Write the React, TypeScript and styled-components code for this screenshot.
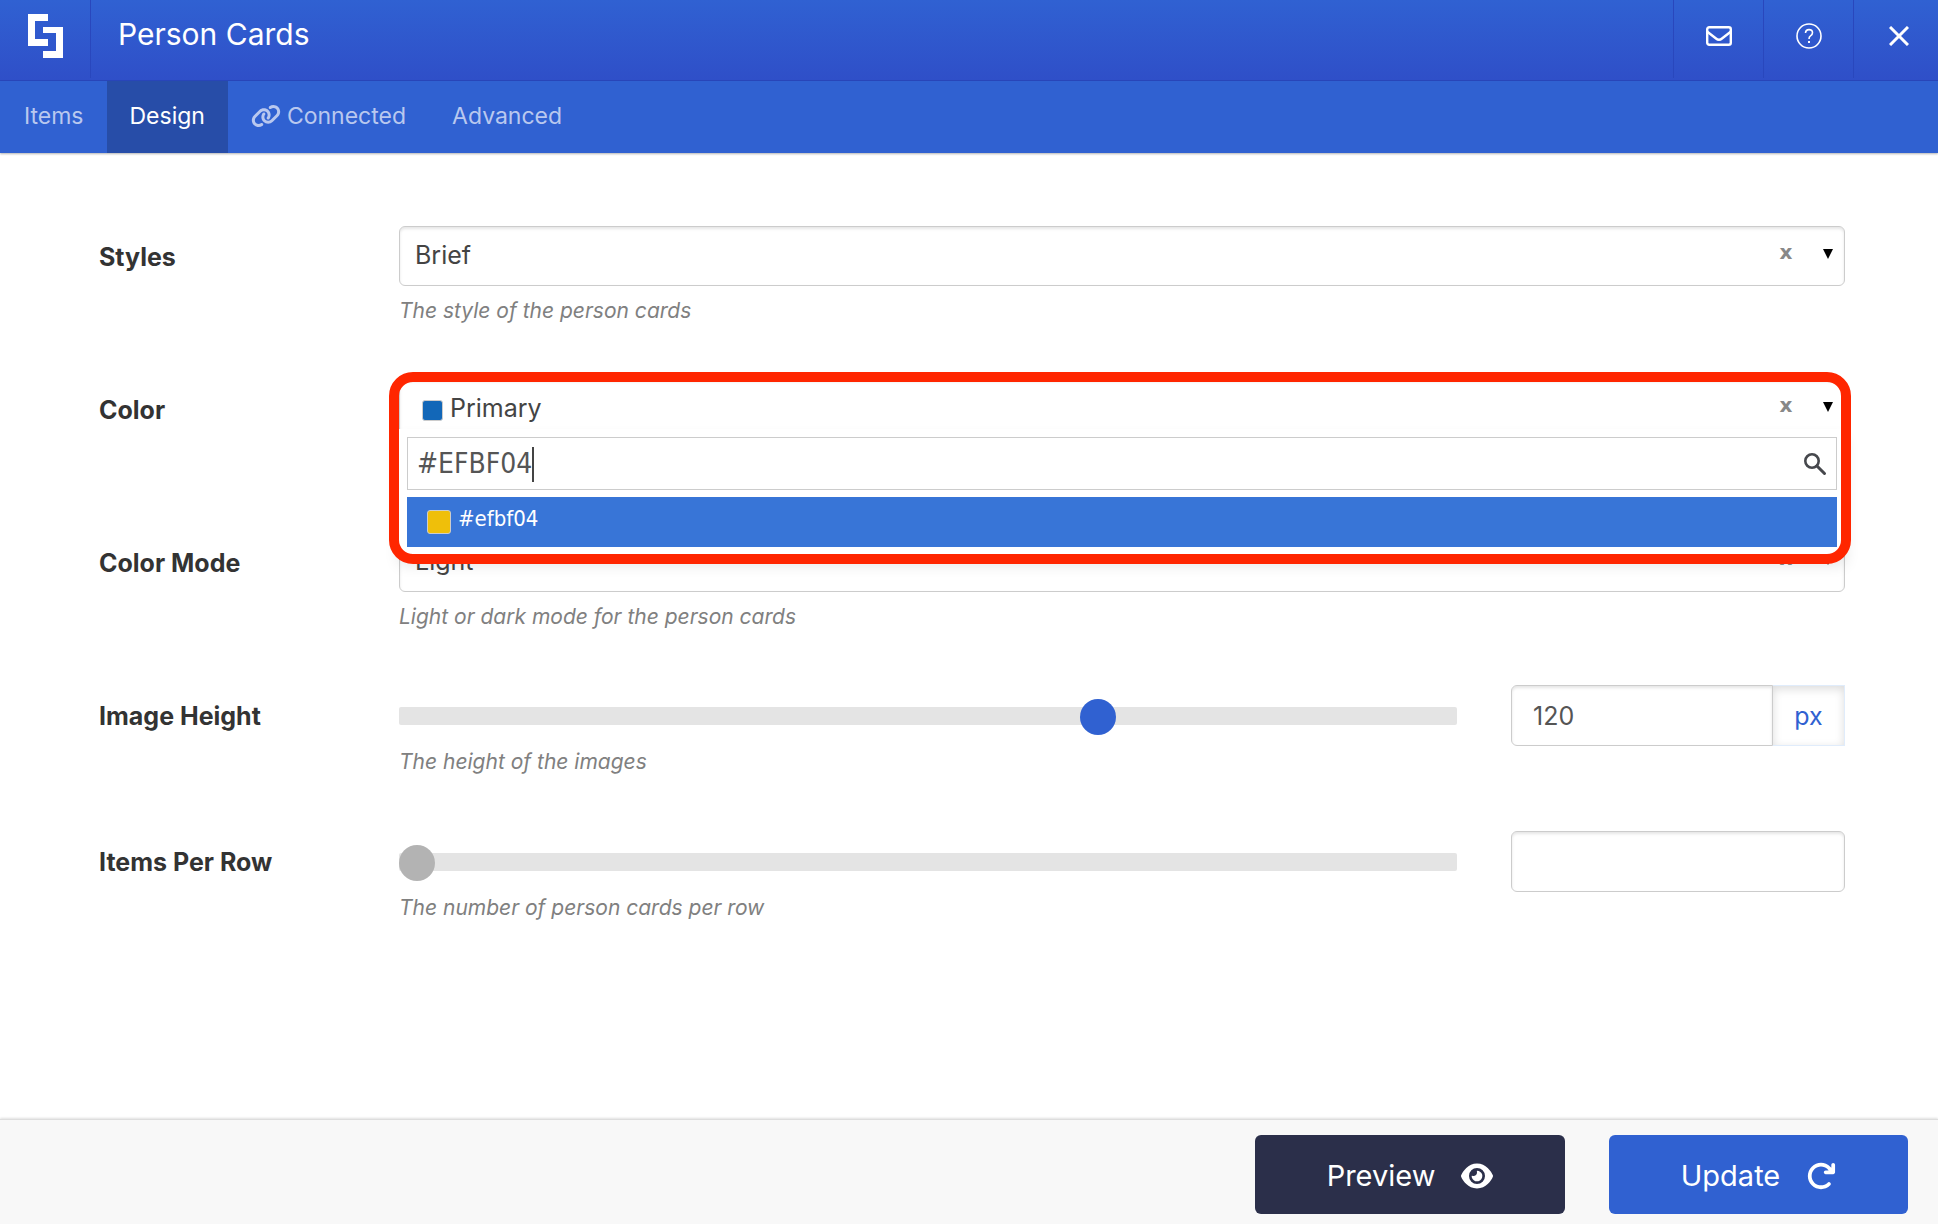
import React, { useState } from "react";
import styled, { createGlobalStyle } from "styled-components";
import { FaEye, FaLink, FaArrowRotateRight } from "react-icons/fa6";

const GlobalStyle = createGlobalStyle`
  *, *::before, *::after { box-sizing: border-box; }
  body { margin: 0; background: #fff; }
  body, button, input, select { font-family: Inter, "Liberation Sans", sans-serif; }
`;

const Page = styled.div`
  display: flex;
  flex-direction: column;
  min-height: 100vh;
  color: #444;
`;

const TopBar = styled.header`
  display: flex;
  height: 81px;
  background: linear-gradient(#3061d2, #2f4fc8);
  border-bottom: 1px solid #2947bd;
`;

const Brand = styled.div`
  display: flex;
  justify-content: center;
  width: 91px;
  margin-bottom: 2px;
  padding-top: 14px;
  border-right: 1px solid #2947bd;
`;

const Title = styled.h1`
  flex: 1;
  margin: 0;
  padding: 14px 27px 0;
  font-size: 30px;
  line-height: 40px;
  font-weight: 400;
  color: #fff;
`;

const HeaderButton = styled.button`
  display: flex;
  align-items: center;
  justify-content: center;
  width: 90px;
  margin: 0 0 2px;
  padding: 0 0 6px;
  border: 0;
  border-left: 1px solid #2947bd;
  background: none;
  color: #fff;

  &:last-child {
    width: 85px;
    padding-left: 5px;
  }
`;

const Tabs = styled.nav`
  display: flex;
  height: 72px;
  padding-left: 1px;
  background: #3061d1;
  box-shadow: 0 1px 2px rgba(0, 0, 0, 0.3);
`;

const Tab = styled.a<{ $active?: boolean }>`
  display: flex;
  align-items: center;
  gap: 6px;
  padding: 0 23px 3px;
  font-size: 23px;
  line-height: 32px;
  text-decoration: none;
  color: ${(p) => (p.$active ? "#fff" : "#b9c8ef")};
  background: ${(p) => (p.$active ? "#274da8" : "transparent")};
`;

const Form = styled.main`
  flex: 1;
  padding: 73px 93px 40px 99px;
`;

const Row = styled.div<{ $height: number }>`
  display: grid;
  grid-template-columns: 300px 1fr;
  min-height: ${(p) => p.$height}px;
`;

const Label = styled.label`
  padding-top: 15px;
  font-size: 25px;
  line-height: 32px;
  font-weight: 700;
  color: #333;
`;

const Field = styled.div`
  position: relative;
  min-width: 0;
`;

const Help = styled.p`
  margin: 12px 0 0;
  font-size: 21px;
  line-height: 26px;
  font-style: italic;
  color: #808080;
`;

const SelectBox = styled.div`
  display: grid;
  grid-template-columns: 1fr 52px 32px;
  align-items: center;
  height: 60px;
  border: 1px solid #ccc;
  border-radius: 6px;
  background: #fff;
  box-shadow: inset 0 2px 3px rgba(0, 0, 0, 0.1);
`;

const Select = styled.select<{ $swatch?: boolean }>`
  grid-area: 1 / 1 / 2 / 4;
  width: 100%;
  height: 58px;
  padding: 0 84px 2px ${(p) => (p.$swatch ? 50 : 15)}px;
  border: 0;
  outline: 0;
  appearance: none;
  background: transparent;
  font-size: 25px;
  color: #444;
`;

const Clear = styled.button`
  grid-area: 1 / 2;
  height: 32px;
  padding: 0 0 8px;
  border: 0;
  background: none;
  font-family: "DejaVu Sans", sans-serif;
  font-size: 20px;
  line-height: 24px;
  font-weight: 700;
  color: #888;
`;

const Arrow = styled.span`
  grid-area: 1 / 3;
  justify-self: center;
  margin-bottom: 5px;
  border: 5px solid transparent;
  border-top: 10px solid #000;
  border-bottom: 0;
  pointer-events: none;
`;

const Swatch = styled.span<{ $color: string; $size: number }>`
  width: ${(p) => p.$size}px;
  height: ${(p) => p.$size}px;
  border: 1px solid #ccc;
  border-radius: 3px;
  background: ${(p) => p.$color};
`;

const SelectSwatch = styled(Swatch)`
  grid-area: 1 / 1;
  margin: 2px 0 0 22px;
`;

const Dropdown = styled.div`
  position: absolute;
  z-index: 1;
  top: 50px;
  left: 0;
  right: 0;
  padding: 8px 8px 7px;
  background: #fff;
  box-shadow: 0 10px 14px rgba(0, 0, 0, 0.12);
`;

const SearchBox = styled.div`
  display: flex;
  align-items: center;
  height: 53px;
  padding: 0 9px;
  border: 1px solid #ccc;
`;

const SearchInputWrap = styled.div`
  position: relative;
  flex: 1;
`;

const SearchInput = styled.input`
  display: block;
  width: 100%;
  height: 50px;
  padding: 0;
  border: 0;
  outline: 0;
  background: transparent;
  font-family: "DejaVu Sans Condensed", "Open Sans", sans-serif;
  font-size: 28px;
  caret-color: transparent;
  color: #555;
`;

const Caret = styled.span`
  position: absolute;
  top: 8px;
  left: 115px;
  width: 2px;
  height: 35px;
  background: #444;
`;

const Option = styled.button`
  display: flex;
  align-items: center;
  gap: 7px;
  width: 100%;
  height: 50px;
  margin-top: 7px;
  padding: 0 20px;
  border: 0;
  background: #3875d7;
  font-family: "DejaVu Sans Condensed", "Open Sans", sans-serif;
  font-size: 22px;
  color: #fff;
`;

const OptionText = styled.span`
  padding-bottom: 8px;
`;

const Highlight = styled.div`
  position: absolute;
  z-index: 2;
  top: -7px;
  left: -10px;
  right: -6px;
  height: 192px;
  border: 10px solid #ff2600;
  border-radius: 24px;
  pointer-events: none;
`;

const SliderField = styled.div`
  display: grid;
  grid-template-columns: 1fr 334px;
  column-gap: 54px;
`;

const Range = styled.input<{ $thumb: string }>`
  display: block;
  width: 100%;
  height: 36px;
  margin: 13px 0 15px;
  appearance: none;
  background: transparent;

  &::-webkit-slider-runnable-track {
    height: 18px;
    border-radius: 2px;
    background: #e4e4e4;
  }
  &::-webkit-slider-thumb {
    appearance: none;
    width: 36px;
    height: 36px;
    margin-top: -8px;
    border-radius: 50%;
    background: ${(p) => p.$thumb};
  }
`;

const ValueBox = styled.div`
  display: flex;
  height: 61px;
`;

const ValueInput = styled.input<{ $joined?: boolean }>`
  flex: 1;
  min-width: 0;
  padding: 0 21px;
  border: 1px solid #ccc;
  border-radius: ${(p) => (p.$joined ? "6px 0 0 6px" : "6px")};
  outline: 0;
  background: #fff;
  box-shadow: inset 0 2px 3px rgba(0, 0, 0, 0.1);
  font-size: 25px;
  color: #555;
`;

const Unit = styled.button`
  width: 72px;
  padding: 0;
  border: 1px solid #e0ecfb;
  border-left: 0;
  background: #fff;
  box-shadow: inset 0 3px 10px rgba(0, 0, 0, 0.14);
  font-size: 25px;
  color: #3061d1;
`;

const Footer = styled.footer`
  display: flex;
  justify-content: flex-end;
  gap: 44px;
  height: 105px;
  padding: 15px 30px 0;
  border-top: 1px solid #ddd;
  background: #f8f8f8;
  box-shadow: 0 -1px 2px rgba(0, 0, 0, 0.12);
`;

const Action = styled.button<{ $primary?: boolean }>`
  display: flex;
  align-items: center;
  justify-content: center;
  gap: 26px;
  width: ${(p) => (p.$primary ? 299 : 310)}px;
  height: 79px;
  padding: 2px 0 0;
  border: 0;
  border-radius: 6px;
  background: ${(p) => (p.$primary ? "#3061d1" : "#2b2f4a")};
  font-size: 29px;
  color: #fff;
`;

function Logo() {
  return (
    <svg width="35" height="44" viewBox="0 0 35 44" fill="#fff" aria-hidden="true">
      <path d="M0 0H20V7H7V25H20V32H0Z" />
      <path d="M15 13H35V44H15V37H28V19H15Z" />
    </svg>
  );
}

function MailIcon() {
  return (
    <svg width="26" height="20" viewBox="0 0 26 20" fill="none" stroke="#fff" strokeWidth="2.400" aria-hidden="true">
      <rect x="1.200" y="1.200" width="23.600" height="17.600" rx="2" />
      <path d="M1 5.500L10 12.500Q13 15 16 12.500L25 5.500" />
    </svg>
  );
}

function HelpIcon() {
  return (
    <svg width="26" height="26" viewBox="0 0 26 26" fill="none" stroke="#fff" strokeWidth="1.600" aria-hidden="true">
      <circle cx="13" cy="13" r="12" />
      <path d="M9.500 10Q9.700 6.600 13 6.600Q16.500 6.600 16.500 9.700Q16.500 11.500 14.500 12.800Q13 13.800 13 16" />
      <path d="M12 19H14" strokeWidth="2" />
    </svg>
  );
}

function CloseIcon() {
  return (
    <svg width="20" height="20" viewBox="0 0 20 20" stroke="#fff" strokeWidth="3" aria-hidden="true">
      <path d="M1 1L19 19M19 1L1 19" />
    </svg>
  );
}

function SearchIcon() {
  return (
    <svg width="24" height="24" viewBox="0 0 24 24" fill="none" stroke="#46484d" strokeWidth="2.600" aria-hidden="true">
      <circle cx="9" cy="9" r="6.700" />
      <path d="M14 14L21.500 21.500" strokeWidth="3" strokeLinecap="round" />
    </svg>
  );
}

interface SelectFieldProps {
  id: string;
  label: string;
  value: string;
  swatch?: string;
  help?: string;
  children?: React.ReactNode;
}

function SelectField({ id, label, value, swatch, help, children }: SelectFieldProps) {
  return (
    <Row $height={153}>
      <Label htmlFor={id}>{label}</Label>
      <Field>
        <SelectBox>
          {swatch && <SelectSwatch $color={swatch} $size={21} />}
          <Select id={id} $swatch={!!swatch}>
            <option>{value}</option>
          </Select>
          <Clear type="button" aria-label={`Clear ${label}`}>x</Clear>
          <Arrow />
        </SelectBox>
        {help && <Help>{help}</Help>}
        {children}
      </Field>
    </Row>
  );
}

interface SliderRowProps {
  id: string;
  label: string;
  help: string;
  initial: string;
  max: number;
  unit?: string;
}

function SliderRow({ id, label, help, initial, max, unit }: SliderRowProps) {
  const [value, setValue] = useState(initial);
  return (
    <Row $height={146}>
      <Label htmlFor={id}>{label}</Label>
      <SliderField>
        <div>
          <Range
            type="range"
            min={0}
            max={max}
            value={value || "0"}
            aria-label={`${label} slider`}
            $thumb={value ? "#3061d1" : "#b3b3b3"}
            onChange={(e) => setValue(e.target.value)}
          />
          <Help>{help}</Help>
        </div>
        <ValueBox>
          <ValueInput id={id} type="text" value={value} $joined={!!unit} onChange={(e) => setValue(e.target.value)} />
          {unit && <Unit type="button">{unit}</Unit>}
        </ValueBox>
      </SliderField>
    </Row>
  );
}

export default function App() {
  const [query, setQuery] = useState("#EFBF04");
  return (
    <Page>
      <GlobalStyle />
      <TopBar>
        <Brand><Logo /></Brand>
        <Title>Person Cards</Title>
        <HeaderButton type="button" aria-label="Messages"><MailIcon /></HeaderButton>
        <HeaderButton type="button" aria-label="Help"><HelpIcon /></HeaderButton>
        <HeaderButton type="button" aria-label="Close"><CloseIcon /></HeaderButton>
      </TopBar>
      <Tabs>
        <Tab href="#items">Items</Tab>
        <Tab href="#design" $active>Design</Tab>
        <Tab href="#connected"><FaLink size={30} />Connected</Tab>
        <Tab href="#advanced">Advanced</Tab>
      </Tabs>
      <Form>
        <SelectField id="styles" label="Styles" value="Brief" help="The style of the person cards" />
        <SelectField id="color" label="Color" value="Primary" swatch="#1267b8">
          <Dropdown>
            <SearchBox>
              <SearchInputWrap>
                <SearchInput aria-label="Search colors" value={query} onChange={(e) => setQuery(e.target.value)} />
                <Caret />
              </SearchInputWrap>
              <SearchIcon />
            </SearchBox>
            <Option type="button">
              <Swatch $color="#efbf0a" $size={24} />
              <OptionText>#efbf04</OptionText>
            </Option>
          </Dropdown>
          <Highlight />
        </SelectField>
        <SelectField id="mode" label="Color Mode" value="Light" help="Light or dark mode for the person cards" />
        <SliderRow id="height" label="Image Height" help="The height of the images" initial="120" max={180} unit="px" />
        <SliderRow id="per-row" label="Items Per Row" help="The number of person cards per row" initial="" max={12} />
      </Form>
      <Footer>
        <Action type="button">Preview<FaEye size={32} /></Action>
        <Action type="button" $primary>Update<FaArrowRotateRight size={30} /></Action>
      </Footer>
    </Page>
  );
}
